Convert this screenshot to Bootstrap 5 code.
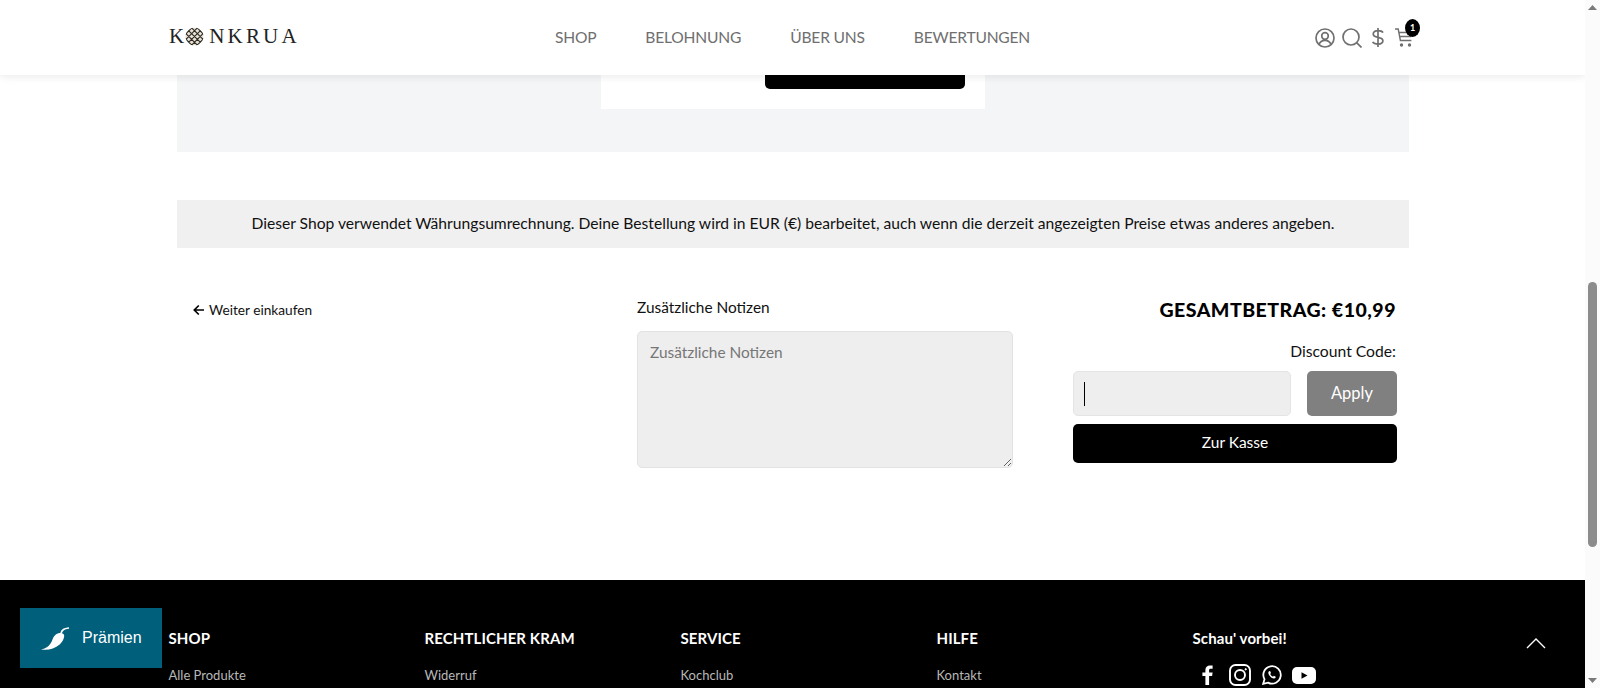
<!DOCTYPE html>
<html lang="de">
<head>
<meta charset="utf-8">
<title>Warenkorb</title>
<link href="https://cdn.jsdelivr.net/npm/bootstrap@5.3.0/dist/css/bootstrap.min.css" rel="stylesheet">
<style>
html,body{height:688px;overflow:hidden}
body{font-family:"Lato","Liberation Sans",sans-serif;color:#111;font-size:15px;background:#fff}
.shell{width:1600px;height:688px;overflow:hidden}
.pagearea{width:1585px;height:688px;overflow:hidden;position:relative}
.sbar{width:15px;height:688px;background:#fbfbfb}
.sbar-arrow{height:15px}
.sbar-gap-top{height:267px}
.sbar-gap-bottom{height:126px}
.sbar-thumb{height:265px;margin:0 3px;background:#8c8c8c;border-radius:5px}
.topbar{position:absolute;left:0;top:0;width:1585px;height:75px;background:#fff;box-shadow:0 2px 8px rgba(0,0,0,.08);z-index:5;padding:0 172px 0 169px}
.logo-wrap{width:300px;font-family:"Liberation Serif",serif;font-size:21px;letter-spacing:3.2px;color:#222;line-height:1;margin-bottom:3px}
.logo-k{letter-spacing:0}
.logo-mark{margin:0 5px 0 1px}
.menu-wrap{gap:49px;font-size:15.6px;letter-spacing:-.2px;color:#6f6f6f;padding-top:1px;margin-left:3px}
.icon-wrap{width:300px}
.ic-search{margin-left:7px}
.ic-dollar{margin-left:10px}
.cartbox{position:relative;margin-left:11px}
.cartcount{position:absolute;top:-9px;right:-7px;width:15px;height:18px;border-radius:50%;background:#000;color:#fff;font-size:9px;font-weight:700;display:flex;align-items:center;justify-content:center}
.panelband{margin:0 176px 0 177px;height:152px;background:#f4f5f7}
.panelbox{width:384px;height:109px;margin-left:424px;background:#fff;padding-left:164px}
.panelbtn{width:200px;height:89px;background:#000;border-radius:0 0 5px 5px}
.noticebar{margin:48px 176px 0 177px;height:48px;background:#f0f0f0;font-size:15.65px;color:#111}
.cartrow{margin:48px 0 0 193px;height:284px}
.backcol{width:444px;padding-top:4px;font-size:13.7px}
.notecol{width:376px}
.notelabel{font-size:15.4px;line-height:20px;height:34px;margin-top:1px}
.notearea{display:block;width:376px;height:137px;background:#eee;border:1px solid #e2e2e2;border-radius:5px;padding:9px 12px;font-family:inherit;font-size:15.4px;color:#111}
.notearea::placeholder{color:#767676;opacity:1}
.sumcol{width:324px;margin-left:60px}
.totalline{font-weight:900;font-size:19.5px;letter-spacing:.5px;text-align:right;padding-right:1px;line-height:24px;margin-top:2px;color:#000}
.disclabel{text-align:right;font-size:15.7px;line-height:20px;margin-top:19px;padding-right:1px}
.codeline{gap:16px;margin-top:10px}
.codefield{width:218px;height:45px;background:#eee;border:1px solid #e4e4e4;border-radius:5px;padding-left:10px}
.caretbar{width:1px;height:24px;background:#000}
.applybtn{width:90px;height:45px;background:#808080;border:0;border-radius:5px;color:#fff;font-size:16.5px}
.checkoutbtn{width:324px;height:39px;background:#000;border:0;border-radius:5px;color:#fff;font-size:15.5px;margin-top:8px;display:block;padding:0 0 2px}
.footband{background:#000;height:108px;padding:50px 0 0 168.5px;color:#fff}
.footcol{width:256px}
.footcol-last{width:220px}
.foothead{font-weight:700;font-size:15px;letter-spacing:.1px;line-height:16px}
.footlink{font-size:13px;color:#b8b8b8;margin-top:21px;line-height:16px}
.socials{margin:18px 0 0 9px}
.sc-ig{margin-left:15px}
.sc-wa{margin-left:11px}
.sc-yt{margin-left:10px}
.rewards{position:absolute;left:20px;top:608px;width:142px;height:60px;background:#005f7b;color:#fff;z-index:6;font-family:"Liberation Sans",sans-serif;font-size:16px;gap:12px;padding-left:21px}
.uparrow{position:absolute;left:1526px;top:637px;z-index:6}
</style>
</head>
<body>
<div class="shell d-flex">
  <div class="pagearea">
    <header class="topbar d-flex align-items-center">
      <div class="logo-wrap d-flex align-items-center"><span class="logo-k">K</span><svg class="logo-mark" width="19" height="19" viewBox="0 0 20 20"><defs><clipPath id="logoclip"><circle cx="10" cy="10" r="9.500"/></clipPath></defs><g clip-path="url(#logoclip)" stroke="#2e2a24" stroke-width="1.200" fill="none"><circle cx="10" cy="10" r="9.500" fill="#e9e3d6" stroke="none"/><path d="M-2 10 10-2M1 13 13 1M4 16 16 4M7 19 19 7M10 22 22 10M-2 10l12 12M1 7l12 12M4 4l12 12M7 1l12 12M10-2l12 12"/></g></svg><span>NKRUA</span></div>
      <nav class="menu-wrap d-flex flex-grow-1 justify-content-center"><span>SHOP</span><span>BELOHNUNG</span><span>ÜBER UNS</span><span>BEWERTUNGEN</span></nav>
      <div class="icon-wrap d-flex justify-content-end align-items-center">
        <svg width="20" height="20" viewBox="0 0 20 20" fill="none" stroke="#707070" stroke-width="1.700"><circle cx="10" cy="10" r="9"/><circle cx="10" cy="8" r="3.300"/><path d="M4 16.500c1-2.900 3.300-4.200 6-4.200s5 1.300 6 4.200"/></svg>
        <svg class="ic-search" width="20" height="20" viewBox="0 0 20 20" fill="none" stroke="#707070" stroke-width="1.700"><circle cx="9" cy="9" r="8"/><path d="M14.800 14.800l4.700 4.700"/></svg>
        <svg class="ic-dollar" width="12" height="19" viewBox="0 0 12 19" fill="none" stroke="#707070" stroke-width="1.700"><path d="M6 0v19M11 4.600C10.200 3.200 8.300 2.600 6 2.600 3.200 2.600 1.200 4 1.200 6.100c0 2.200 2 2.900 4.800 3.300 2.800.5 4.900 1.200 4.900 3.400 0 2.200-2.200 3.300-4.900 3.300-2.600 0-4.500-.7-5.400-2.200"/></svg>
        <span class="cartbox"><svg class="d-block" width="18" height="19" viewBox="0 0 18 19" fill="none" stroke="#707070" stroke-width="1.400"><path d="M0 1h3.200l2.200 11.500h11M3.800 4.500h13.400M4.600 8.500h11.700"/><circle cx="6.500" cy="17" r="1" fill="#707070"/><circle cx="14.500" cy="17" r="1" fill="#707070"/></svg><span class="cartcount">1</span></span>
      </div>
    </header>

    <section class="panelband">
      <div class="panelbox"><div class="panelbtn"></div></div>
    </section>

    <div class="noticebar d-flex align-items-center justify-content-center">Dieser Shop verwendet Währungsumrechnung. Deine Bestellung wird in EUR (€) bearbeitet, auch wenn die derzeit angezeigten Preise etwas anderes angeben.</div>

    <section class="cartrow d-flex">
      <div class="backcol d-flex align-items-start gap-1"><svg class="mt-1" width="12" height="12" viewBox="0 0 12 12" fill="none" stroke="#000" stroke-width="1.700"><path d="M11 6H1.500M5.800 1.500 1.300 6l4.500 4.500"/></svg><span>Weiter einkaufen</span></div>
      <div class="notecol">
        <div class="notelabel">Zusätzliche Notizen</div>
        <textarea class="notearea" placeholder="Zusätzliche Notizen"></textarea>
      </div>
      <div class="sumcol">
        <div class="totalline">GESAMTBETRAG: €10,99</div>
        <div class="disclabel">Discount Code:</div>
        <div class="codeline d-flex">
          <div class="codefield d-flex align-items-center"><span class="caretbar"></span></div>
          <button class="applybtn" type="button">Apply</button>
        </div>
        <button class="checkoutbtn" type="button">Zur Kasse</button>
      </div>
    </section>

    <footer class="footband d-flex">
      <div class="footcol"><div class="foothead">SHOP</div><div class="footlink">Alle Produkte</div></div>
      <div class="footcol"><div class="foothead">RECHTLICHER KRAM</div><div class="footlink">Widerruf</div></div>
      <div class="footcol"><div class="foothead">SERVICE</div><div class="footlink">Kochclub</div></div>
      <div class="footcol"><div class="foothead">HILFE</div><div class="footlink">Kontakt</div></div>
      <div class="footcol-last">
        <div class="foothead">Schau' vorbei!</div>
        <div class="socials d-flex align-items-center">
          <svg width="12" height="20" viewBox="0 0 12 20" fill="#fff"><path d="M3.400 20v-9H.4V7.500h3V5C3.400 2 5.200.4 7.900.4c1.300 0 2.400.1 2.700.2v3.100H8.800c-1.400 0-1.700.7-1.700 1.700v2.100h3.500l-.5 3.500h-3v9z"/></svg>
          <svg class="sc-ig" width="22" height="22" viewBox="0 0 22 22" fill="none" stroke="#fff" stroke-width="1.900"><rect x="1" y="1" width="20" height="20" rx="5.500"/><circle cx="11" cy="11" r="5"/><circle cx="16.700" cy="5.300" r=".7" fill="#fff" stroke-width="1"/></svg>
          <svg class="sc-wa" width="20" height="20" viewBox="0 0 20 20" fill="none" stroke="#fff" stroke-width="1.800"><path d="M1.200 18.800l1.300-4.600A8.700 8.700 0 1 1 6 17.600z"/><path d="M7 6.200c-1 .8-1 2.400.4 4.300 1.500 2 3.300 3.200 4.800 3 1-.2 1.700-1 1.500-1.700l-1.800-1-.9.900c-1-.4-2.200-1.600-2.800-2.800l.8-.9-.9-1.900z" fill="#fff" stroke="none"/></svg>
          <svg class="sc-yt" width="24" height="17" viewBox="0 0 24 17"><rect width="24" height="17" rx="5" fill="#fff"/><path d="M9.500 5.200v6.600l6-3.300z" fill="#000"/></svg>
        </div>
      </div>
    </footer>

    <div class="rewards d-flex align-items-center">
      <svg width="29" height="23" viewBox="0 0 29 23" fill="#fff"><path d="M0 22.500C6 21.500 9.500 18 11.500 12.500 13 8.500 15.500 6 19.500 6c2 0 3.800 1 3.700 3-.2 3-2 6-4.500 8.500C13.500 22 7 23.500 0 22.500z"/><path d="M20 6.500c.3-1.500 1-3 2.500-4 1.500-1 3.300-1.200 5.500-1.500" fill="none" stroke="#fff" stroke-width="1.600"/></svg>
      <span>Prämien</span>
    </div>
    <svg class="uparrow" width="20" height="12" viewBox="0 0 20 12" fill="none" stroke="#fff" stroke-width="1.400"><path d="M1 11 10 2l9 9"/></svg>
  </div>
  <aside class="sbar">
    <div class="sbar-arrow d-flex justify-content-center align-items-center"><svg width="9" height="5" viewBox="0 0 9 5" fill="#7a7a7a"><path d="M0 5 4.500 0 9 5z"/></svg></div>
    <div class="sbar-gap-top"></div>
    <div class="sbar-thumb"></div>
    <div class="sbar-gap-bottom"></div>
    <div class="sbar-arrow d-flex justify-content-center align-items-center"><svg width="9" height="5" viewBox="0 0 9 5" fill="#7a7a7a"><path d="M0 0 4.500 5 9 0z"/></svg></div>
  </aside>
</div>
<script src="https://cdn.jsdelivr.net/npm/bootstrap@5.3.0/dist/js/bootstrap.bundle.min.js"></script>
</body>
</html>
